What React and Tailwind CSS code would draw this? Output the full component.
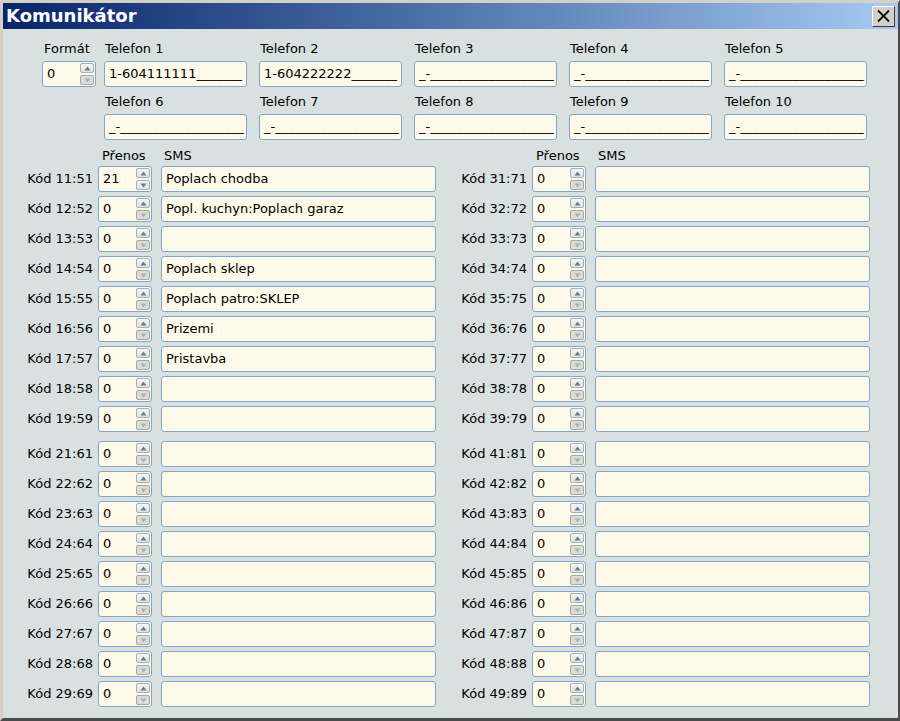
import React from "react";

const font = "font-['DejaVu_Sans',sans-serif] text-[13px] text-black";

function Arrow({ up, disabled }) {
  return (
    <svg width="7" height="5" viewBox="0 0 7 5">
      <polygon
        points={up ? "3.5,0.5 6.5,4.5 0.5,4.5" : "0.5,0.5 6.5,0.5 3.5,4.5"}
        fill={disabled ? "#a9b0b6" : "#5b7ea0"}
      />
    </svg>
  );
}

function SpinBtn({ up, disabled }) {
  return (
    <div
      className={
        "flex h-[10px] w-[14px] items-center justify-center rounded-[2px] border " +
        (disabled
          ? "border-[#a8a8a0] bg-[#dcdcd4]"
          : "border-[#9fb0c0] bg-gradient-to-b from-[#f7f7f2] to-[#e2e2d8]")
      }
    >
      <Arrow up={up} disabled={disabled} />
    </div>
  );
}

function Spin({ value }) {
  const zero = value === "0";
  return (
    <div className="flex h-[26px] w-[54px] shrink-0 items-center rounded-[3px] border border-[#7fa8cf] bg-[#fff9e9] pl-[4px] pr-[1px]">
      <span className="flex-1 leading-[24px]">{value}</span>
      <div className="flex flex-col gap-[2px]">
        <SpinBtn up />
        <SpinBtn disabled={zero} />
      </div>
    </div>
  );
}

function Field({ text, className = "" }) {
  return (
    <div
      className={
        "h-[26px] overflow-hidden whitespace-nowrap rounded-[3px] border border-[#7fa8cf] bg-[#fff9e9] pl-[4px] leading-[24px] " +
        className
      }
    >
      {text}
    </div>
  );
}

// phone masks, first two filled in
const emptyMask = "_-" + "_".repeat(19);
const phoneList = [
  "1-604111111" + "_".repeat(7),
  "1-604222222" + "_".repeat(7),
  ...Array(8).fill(emptyMask),
];

const leftSms = {
  11: "Poplach chodba",
  12: "Popl. kuchyn:Poplach garaz",
  14: "Poplach sklep",
  15: "Poplach patro:SKLEP",
  16: "Prizemi",
  17: "Pristavba",
};

function CodeRow({ a, labelW, sms, value }) {
  return (
    <div className="flex h-[26px] items-center">
      <div className={labelW + " shrink-0 pr-[5px] text-right leading-[26px]"}>
        Kód {a}:{a + 40}
      </div>
      <Spin value={value} />
      <Field text={sms} className="ml-[9px] w-[275px]" />
    </div>
  );
}

function CodeColumn({ start, labelW }) {
  const block = (base) =>
    Array.from({ length: 9 }, (_, i) => base + i).map((a) => (
      <CodeRow
        key={a}
        a={a}
        labelW={labelW}
        value={a === 11 ? "21" : "0"}
        sms={leftSms[a] || ""}
      />
    ));
  return (
    <div className="flex flex-col">
      <div className="flex h-[16px] leading-[16px]">
        <div className={labelW + " shrink-0"} />
        <div className="w-[63px] pl-[4px]">Přenos</div>
        <div className="pl-[3px]">SMS</div>
      </div>
      <div className="mt-[2px] flex flex-col gap-[4px]">{block(start)}</div>
      <div className="mt-[9px] flex flex-col gap-[4px]">{block(start + 10)}</div>
    </div>
  );
}

export default function App() {
  return (
    <div
      className={
        font +
        " flex h-[721px] w-[900px] flex-col border-b-[3px] border-l-[3px] border-r-[2px] border-t-[3px] border-b-[#4a4a4a] border-l-[#d4d0c8] border-r-[#4a4a4a] border-t-[#d4d0c8] bg-[#d9e1e0]"
      }
    >
      <div className="flex h-[26px] shrink-0 items-center justify-between bg-gradient-to-r from-[#0a246a] to-[#a6caf0] pl-[3px] pr-[3px]">
        <span className="text-[18px] font-bold leading-[26px] text-white">
          Komunikátor
        </span>
        <div className="flex h-[21px] w-[23px] items-center justify-center border border-b-[#404040] border-l-white border-r-[#404040] border-t-white bg-[#d4d0c8]">
          <svg width="13" height="12" viewBox="0 0 13 12">
            <path d="M1 0.5 L12 11.5 M12 0.5 L1 11.5" stroke="#000" strokeWidth="1.8" />
          </svg>
        </div>
      </div>

      <div className="flex flex-1 flex-col pt-[12px]">
        <div className="flex pl-[39px]">
          <div className="flex w-[54px] flex-col">
            <div className="h-[16px] pl-[2px] leading-[16px]">Formát</div>
            <div className="mt-[4px]">
              <Spin value="0" />
            </div>
          </div>
          <div className="ml-[8px] grid grid-cols-[repeat(5,143px)] gap-x-[12px] gap-y-[7px]">
            {phoneList.map((p, i) => (
              <div key={i} className="flex flex-col">
                <div className="h-[16px] pl-[1px] leading-[16px]">
                  Telefon {i + 1}
                </div>
                <Field text={p} className="mt-[4px] w-[143px]" />
              </div>
            ))}
          </div>
        </div>

        <div className="mt-[8px] flex">
          <CodeColumn start={11} labelW="w-[95px]" />
          <CodeColumn start={31} labelW="w-[96px]" />
        </div>
      </div>
    </div>
  );
}
